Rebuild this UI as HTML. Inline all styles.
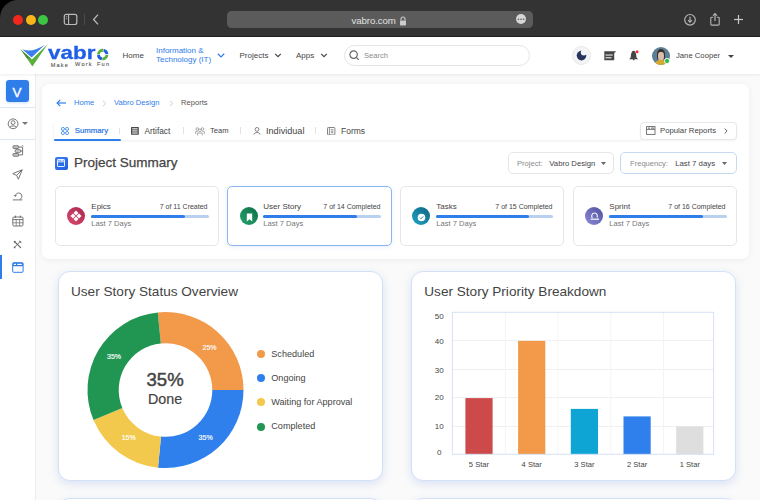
<!DOCTYPE html>
<html><head><meta charset="utf-8">
<style>
*{box-sizing:border-box;margin:0;padding:0}
html,body{width:760px;height:500px;overflow:hidden;background:#000}
body{font-family:"Liberation Sans",sans-serif;position:relative;color:#444}
.a{position:absolute}
.t{position:absolute;white-space:nowrap;line-height:1}
#win{position:absolute;left:0;top:0;width:760px;height:500px;overflow:hidden}
#bg{position:absolute;left:0;top:36px;width:760px;height:464px;background:#fafafa}
#chrome{position:absolute;left:0;top:0;width:760px;height:37px;background:#333333;border-top-left-radius:18px;border-bottom:1px solid #202020}
#hdr{position:absolute;left:0;top:37px;width:760px;height:37px;background:#fff;box-shadow:0 1px 3px rgba(0,0,0,.07);z-index:5}
#side{position:absolute;left:0;top:74px;width:36px;height:426px;background:#fff;border-right:1px solid #ececee}
#panel{position:absolute;left:42px;top:84px;width:707px;height:175px;background:#fff;border-radius:7px;box-shadow:0 1px 6px rgba(0,0,0,.06)}
.card{position:absolute;top:186px;width:164px;height:59.5px;border:1px solid #e6e6e8;border-radius:5px;background:#fff}
.ic{position:absolute;left:11px;top:19.9px;width:18.2px;height:18.2px;border-radius:50%}
.ct{position:absolute;left:35.3px;top:15.8px;font-size:8px;color:#444;line-height:1}
.cr{position:absolute;right:10.5px;top:16.3px;font-size:7px;color:#444;line-height:1}
.bar{position:absolute;left:34.7px;top:28.1px;width:118px;height:3px;border-radius:2px;background:#b9d0f1}
.bar i{position:absolute;left:0;top:0;height:3px;border-radius:2px;background:#2f7de9}
.cl{position:absolute;left:35.3px;top:32.5px;font-size:7.6px;color:#777;line-height:1}
.chart{position:absolute;top:271px;width:324.5px;height:209.5px;background:#fff;border:1px solid #d3e1f7;border-radius:12px;box-shadow:0 3px 10px rgba(80,120,225,.19)}
</style></head><body>
<div id="win">
 <div id="bg"></div>
 <div id="chrome">
  <div class="a" style="left:12.8px;top:14.8px;width:10px;height:10px;border-radius:50%;background:#f0291f"></div>
  <div class="a" style="left:25.6px;top:14.8px;width:10px;height:10px;border-radius:50%;background:#f8b718"></div>
  <div class="a" style="left:38.4px;top:14.8px;width:10px;height:10px;border-radius:50%;background:#3cc644"></div>
  <svg class="a" style="left:63px;top:13px" width="16" height="13" viewBox="0 0 16 13"><rect x="1.3" y="1.3" width="12.5" height="10.2" rx="2" fill="none" stroke="#bbb" stroke-width="1.2"/><line x1="5.6" y1="1.3" x2="5.6" y2="11.5" stroke="#bbb" stroke-width="1.1"/><rect x="2.8" y="3.2" width="1.4" height="1" fill="#999"/><rect x="2.8" y="5.2" width="1.4" height="1" fill="#999"/></svg>
  <div class="a" style="left:83.5px;top:14px;width:1px;height:11px;background:#4a4a4a"></div>
  <svg class="a" style="left:91px;top:13px" width="9" height="13" viewBox="0 0 9 13"><polyline points="7,1.6 2.6,6.5 7,11.4" fill="none" stroke="#bbb" stroke-width="1.3"/></svg>
  <div class="a" style="left:227px;top:10.5px;width:306px;height:17.5px;background:#5b5b5b;border-radius:4.5px"></div>
  <div class="t" style="left:351.5px;top:15.8px;font-size:9.7px;color:#e0e0e0;letter-spacing:-0.1px">vabro.com</div>
  <svg class="a" style="left:399px;top:16px" width="8" height="10" viewBox="0 0 8 10"><path d="M2,4.5 V3 a2,2 0 0 1 4,0 V4.5" fill="none" stroke="#ccc" stroke-width="1.1"/><rect x="1" y="4.5" width="6" height="5" rx="0.8" fill="#ccc"/></svg>
  <svg class="a" style="left:516px;top:14px" width="10" height="10" viewBox="0 0 10 10"><circle cx="5" cy="5" r="5" fill="#d6d6d6"/><circle cx="2.4" cy="5.2" r="0.8" fill="#555"/><circle cx="5" cy="5.2" r="0.8" fill="#555"/><circle cx="7.6" cy="5.2" r="0.8" fill="#555"/></svg>
  <svg class="a" style="left:683px;top:13px" width="15" height="14" viewBox="0 0 15 14"><circle cx="7" cy="6.8" r="5.3" fill="none" stroke="#b5b5b5" stroke-width="1.2"/><line x1="7" y1="3.8" x2="7" y2="9.2" stroke="#b5b5b5" stroke-width="1.2"/><polyline points="5,7.2 7,9.2 9,7.2" fill="none" stroke="#b5b5b5" stroke-width="1.2"/></svg>
  <svg class="a" style="left:709px;top:12px" width="13" height="15" viewBox="0 0 13 15"><path d="M4.2,5.2 H2.7 a0.9,0.9 0 0 0 -0.9,0.9 V12.2 a0.9,0.9 0 0 0 0.9,0.9 H9.3 a0.9,0.9 0 0 0 0.9,-0.9 V6.1 a0.9,0.9 0 0 0 -0.9,-0.9 H7.8" fill="none" stroke="#b5b5b5" stroke-width="1.1"/><line x1="6" y1="1.8" x2="6" y2="9" stroke="#b5b5b5" stroke-width="1.2"/><polyline points="4,3.6 6,1.6 8,3.6" fill="none" stroke="#b5b5b5" stroke-width="1.2"/></svg>
  <svg class="a" style="left:733px;top:14px" width="11" height="11" viewBox="0 0 11 11"><line x1="5.5" y1="1" x2="5.5" y2="10" stroke="#c8c8c8" stroke-width="1.2"/><line x1="1" y1="5.5" x2="10" y2="5.5" stroke="#c8c8c8" stroke-width="1.2"/></svg>
 </div>

 <div id="hdr">
  <!-- logo -->
  <svg class="a" style="left:18px;top:3px" width="32" height="30" viewBox="18 40 32 30">
   <path d="M20.8,49.4 L32.4,66.6 L47.8,43.9 L31.8,59.6 Z" fill="#5cb040"/>
   <path d="M20.8,49.4 L26.5,57.8 L31.8,59.6 Z" fill="#3f8a2e"/>
   <path d="M22.3,49.2 Q32,53.5 44.8,44.8 L31.6,57.6 Z" fill="#3a7ff0"/>
  </svg>
  <div class="t" style="left:47.7px;top:6.2px;font-size:19px;font-weight:bold;color:#1f5ee6;transform:scaleX(1.18);transform-origin:0 0;-webkit-text-stroke:0.3px #1f5ee6">vabr</div>
  <svg class="a" style="left:96px;top:11px" width="14" height="13" viewBox="96 48 14 13">
   <path d="M98.4,54.5 A4.3,4.3 0 0 1 103.4,50.3" fill="none" stroke="#5cb040" stroke-width="2.8"/>
   <path d="M103.8,50.3 A4.3,4.3 0 0 1 107,54.1" fill="none" stroke="#1f5ee6" stroke-width="2.8"/>
   <path d="M107,54.9 A4.3,4.3 0 0 1 102.3,58.8" fill="none" stroke="#5cb040" stroke-width="2.8"/>
   <path d="M101.9,58.8 A4.3,4.3 0 0 1 98.4,55" fill="none" stroke="#1f5ee6" stroke-width="2.8"/>
  </svg>
  <div class="t" style="left:50.8px;top:25.8px;font-size:5.6px;color:#555;letter-spacing:1.15px;-webkit-text-stroke:0.1px #555">Make</div>
  <div class="t" style="left:75.1px;top:24.9px;font-size:5.6px;color:#555;letter-spacing:1.15px;-webkit-text-stroke:0.1px #555">Work</div>
  <div class="t" style="left:96.9px;top:24.9px;font-size:5.6px;color:#555;letter-spacing:1.3px;-webkit-text-stroke:0.1px #555">Fun</div>

  <div class="t" style="left:122.5px;top:15px;font-size:8px;color:#444">Home</div>
  <div class="t" style="left:156px;top:10.3px;font-size:8px;color:#2f7de9;line-height:8.3px">Information &amp;<br>Technology (IT)</div>
  <svg class="a" style="left:217px;top:53px;top:16px" width="8" height="5" viewBox="0 0 8 5"><polyline points="0.8,0.8 4,3.9 7.2,0.8" fill="none" stroke="#2f7de9" stroke-width="1.2"/></svg>
  <div class="t" style="left:239.5px;top:15px;font-size:8px;color:#444">Projects</div>
  <svg class="a" style="left:273.5px;top:16px" width="8" height="5" viewBox="0 0 8 5"><polyline points="1.2,0.9 4,3.7 6.8,0.9" fill="none" stroke="#444" stroke-width="1.2"/></svg>
  <div class="t" style="left:296px;top:15px;font-size:8px;color:#444">Apps</div>
  <svg class="a" style="left:319.5px;top:16px" width="8" height="5" viewBox="0 0 8 5"><polyline points="1.2,0.9 4,3.7 6.8,0.9" fill="none" stroke="#444" stroke-width="1.2"/></svg>

  <div class="a" style="left:344px;top:8px;width:186px;height:20.5px;border:1px solid #e4e4e6;border-radius:11px"></div>
  <svg class="a" style="left:349px;top:13px" width="11" height="11" viewBox="0 0 11 11"><circle cx="4.6" cy="4.6" r="3.7" fill="none" stroke="#666" stroke-width="1.2"/><line x1="7.3" y1="7.3" x2="9.8" y2="9.8" stroke="#666" stroke-width="1.2"/></svg>
  <div class="t" style="left:364px;top:15px;font-size:7.6px;color:#8a8a8a">Search</div>

  <div class="a" style="left:572px;top:9.2px;width:19px;height:19px;border-radius:50%;background:#f4f4f6;border:1px solid #e8e8ea"></div>
  <svg class="a" style="left:576px;top:13px" width="11" height="11" viewBox="0 0 11 11"><defs><mask id="mm"><rect width="11" height="11" fill="#fff"/><circle cx="7.8" cy="2.6" r="3" fill="#000"/></mask></defs><circle cx="5.5" cy="5.6" r="4.8" fill="#26345e" mask="url(#mm)"/></svg>

  <svg class="a" style="left:603.8px;top:13.7px" width="13" height="10" viewBox="0 0 13 10"><path d="M0.3,0.3 H12.2 L10.2,2.3 V9.3 H0.3 Z" fill="#454545"/><rect x="1.5" y="3.3" width="7.2" height="1.5" fill="#bdbdbd"/><rect x="1.5" y="6.3" width="6" height="1" fill="#fff"/></svg>
  <svg class="a" style="left:629.2px;top:13.3px" width="11" height="11" viewBox="0 0 11 11"><path d="M4.6,0.7 C6.1,0.7 6.9,2.6 7.2,4.8 L7.6,7.7 L9.2,9.2 H0 L1.6,7.7 L2,4.8 C2.3,2.6 3.1,0.7 4.6,0.7Z" fill="#454545"/><rect x="3.9" y="9" width="1.4" height="1.3" fill="#454545"/><circle cx="8.1" cy="1.7" r="1.5" fill="#f0303a"/></svg>

  <div class="a" style="left:652px;top:9.5px;width:18px;height:18px;border-radius:50%;background:#5a7f97;overflow:hidden">
   <div class="a" style="left:4.6px;top:2.6px;width:8.6px;height:11px;border-radius:45% 45% 30% 30%;background:#3d3029"></div>
   <div class="a" style="left:6.2px;top:5px;width:5.6px;height:9px;border-radius:40% 40% 50% 50%;background:#d9bcab"></div>
   <div class="a" style="left:2px;top:13.8px;width:14px;height:8px;border-radius:6px 6px 0 0;background:#d6aa2e"></div>
  </div>
  <div class="a" style="left:664px;top:21px;width:5.5px;height:5.5px;border-radius:50%;background:#2dbb47;border:0.8px solid #fff"></div>

  <div class="t" style="left:676px;top:15px;font-size:7.7px;color:#444">Jane Cooper</div>
  <svg class="a" style="left:728px;top:17.5px" width="6" height="3" viewBox="0 0 6 3"><polygon points="0,0 6,0 3,3" fill="#444"/></svg>
 </div>

 <div id="side">
  <div class="a" style="left:6px;top:6px;width:23px;height:22px;border-radius:3px;background:#2f7de9;box-shadow:0 1px 3px rgba(47,125,233,.25)"></div>
  <div class="t" style="left:12.6px;top:11.5px;font-size:13.5px;color:#fff;-webkit-text-stroke:0.35px #fff">V</div>
  <div class="a" style="left:0;top:33px;width:35px;height:1px;background:#dbe6f6"></div>
  <svg class="a" style="left:6.5px;top:43.5px" width="13" height="13" viewBox="0 0 13 13"><circle cx="6.1" cy="5.8" r="4.9" fill="none" stroke="#666" stroke-width="0.9"/><circle cx="6.1" cy="4.6" r="1.9" fill="none" stroke="#666" stroke-width="0.9"/><path d="M2.8,9.4 C3.6,7.4 8.6,7.4 9.4,9.4" fill="none" stroke="#666" stroke-width="0.9"/></svg>
  <svg class="a" style="left:21.5px;top:47.5px" width="6" height="3.5" viewBox="0 0 6 3.5"><polygon points="0,0 6,0 3,3" fill="#777"/></svg>
  <div class="a" style="left:0;top:65px;width:35px;height:1px;background:#dbe6f6"></div>
  <svg class="a" style="left:11.5px;top:70.5px" width="12" height="12" viewBox="0 0 12 12"><rect x="1" y="0.8" width="5.6" height="2.6" rx="0.6" fill="#ccc" stroke="#666" stroke-width="0.9"/><rect x="3.2" y="4.7" width="5.4" height="2.6" rx="0.6" fill="#ddd" stroke="#666" stroke-width="0.9"/><rect x="1" y="8.6" width="5.6" height="2.6" rx="0.6" fill="#ccc" stroke="#666" stroke-width="0.9"/><path d="M6.6,2.1 H10.6 V9.9 H6.6 M8.6,6 H10.6" fill="none" stroke="#666" stroke-width="0.9"/><polyline points="9.6,1.2 10.6,0.3 11.5,1.2" fill="none" stroke="#666" stroke-width="0.7"/></svg>
  <svg class="a" style="left:12px;top:94.5px" width="11" height="11" viewBox="0 0 11 11"><path d="M10.2,0.8 L0.8,4.6 L4.6,6.4 L6.4,10.2 Z M4.6,6.4 L10.2,0.8" fill="none" stroke="#666" stroke-width="0.9" stroke-linejoin="round"/></svg>
  <svg class="a" style="left:12px;top:118px" width="11" height="9" viewBox="0 0 11 9"><path d="M3.2,4.2 C3.4,2.2 4.9,1 6.6,1 C8.6,1 9.9,2.5 9.9,4.2 C9.9,5.8 9,6.9 7.8,7.3" fill="none" stroke="#666" stroke-width="0.9"/><line x1="0.8" y1="7.9" x2="10.4" y2="7.9" stroke="#666" stroke-width="0.9"/><polyline points="1.9,3 3.2,4.4 4.6,3.4" fill="none" stroke="#666" stroke-width="0.8"/></svg>
  <svg class="a" style="left:12px;top:140.5px" width="12" height="12" viewBox="0 0 12 12"><rect x="0.8" y="2" width="10.2" height="9" rx="1.2" fill="none" stroke="#666" stroke-width="0.9"/><line x1="0.8" y1="4.6" x2="11" y2="4.6" stroke="#666" stroke-width="0.9"/><line x1="3.4" y1="0.6" x2="3.4" y2="3" stroke="#666" stroke-width="0.9"/><line x1="8.4" y1="0.6" x2="8.4" y2="3" stroke="#666" stroke-width="0.9"/><line x1="4.2" y1="4.6" x2="4.2" y2="11" stroke="#666" stroke-width="0.7"/><line x1="7.6" y1="4.6" x2="7.6" y2="11" stroke="#666" stroke-width="0.7"/><line x1="0.8" y1="7.8" x2="11" y2="7.8" stroke="#666" stroke-width="0.7"/></svg>
  <svg class="a" style="left:12.5px;top:165.5px" width="9" height="9" viewBox="0 0 9 9"><line x1="1.8" y1="1.8" x2="7.6" y2="7.6" stroke="#666" stroke-width="1.2" stroke-linecap="round"/><line x1="7.2" y1="1.6" x2="1.6" y2="7.2" stroke="#666" stroke-width="0.9"/><circle cx="1.7" cy="1.7" r="1" fill="#666"/><path d="M6.4,0.8 L8.2,2.6" stroke="#666" stroke-width="1.2"/><circle cx="1.6" cy="7.4" r="0.9" fill="#666"/></svg>
  <div class="a" style="left:0;top:181px;width:2px;height:24px;background:#2f7de9"></div>
  <svg class="a" style="left:12px;top:187.5px" width="12" height="11" viewBox="0 0 12 11"><rect x="0.7" y="0.7" width="10.4" height="9.6" rx="1" fill="#fff" stroke="#2f7de9" stroke-width="1"/><rect x="0.7" y="0.7" width="10.4" height="3.6" rx="0.8" fill="#2f7de9"/><rect x="1.8" y="1.8" width="2.2" height="1.2" fill="#fff"/><rect x="5.2" y="1.8" width="4.6" height="1.2" fill="#fff"/></svg>
 </div>

 <div id="panel"></div>
 <!-- breadcrumb -->
 <svg class="a" style="left:56px;top:99px" width="11" height="8" viewBox="0 0 11 8"><line x1="1.2" y1="4" x2="10" y2="4" stroke="#2f7de9" stroke-width="1.2"/><polyline points="4.2,0.9 1.1,4 4.2,7.1" fill="none" stroke="#2f7de9" stroke-width="1.2"/></svg>
 <div class="t" style="left:74px;top:99px;font-size:7.6px;color:#2f7de9">Home</div>
 <svg class="a" style="left:101.5px;top:100px" width="5" height="7" viewBox="0 0 5 7"><polyline points="1,0.8 3.8,3.5 1,6.2" fill="none" stroke="#c8c8c8" stroke-width="0.9"/></svg>
 <div class="t" style="left:114px;top:99px;font-size:7.6px;color:#2f7de9">Vabro Design</div>
 <svg class="a" style="left:169px;top:100px" width="5" height="7" viewBox="0 0 5 7"><polyline points="1,0.8 3.8,3.5 1,6.2" fill="none" stroke="#c8c8c8" stroke-width="0.9"/></svg>
 <div class="t" style="left:181px;top:99px;font-size:7.6px;color:#555">Reports</div>

 <!-- tabs -->
 <div class="a" style="left:54px;top:122px;width:587px;height:18px;border-radius:3px 3px 0 0;box-shadow:0 1px 3px rgba(0,0,0,.08)"></div>
 <div class="a" style="left:54px;top:139px;width:66.5px;height:2px;background:#2f7de9;border-radius:1px"></div>
 <svg class="a" style="left:60.8px;top:127px" width="8" height="8" viewBox="0 0 8 8"><rect x="0.5" y="0.5" width="2.9" height="2.9" rx="1.2" fill="none" stroke="#2f7de9" stroke-width="0.9"/><rect x="4.6" y="0.5" width="2.9" height="2.9" rx="1.2" fill="none" stroke="#2f7de9" stroke-width="0.9"/><rect x="0.5" y="4.6" width="2.9" height="2.9" rx="1.2" fill="none" stroke="#2f7de9" stroke-width="0.9"/><rect x="4.6" y="4.6" width="2.9" height="2.9" rx="1.2" fill="none" stroke="#2f7de9" stroke-width="0.9"/></svg>
 <div class="t" style="left:74.7px;top:127px;font-size:7.8px;color:#2b74e4;-webkit-text-stroke:0.2px #2b74e4">Summary</div>
 <div class="a" style="left:119px;top:127.5px;width:1px;height:6.5px;background:#e2e2e2"></div>
 <svg class="a" style="left:131.3px;top:127px" width="8" height="8" viewBox="0 0 8 8"><rect x="0" y="0" width="7.8" height="7.8" rx="0.5" fill="#4a4a4a"/><rect x="1.2" y="1.2" width="5.4" height="1.2" fill="#e0e0e0"/><rect x="1.2" y="3.3" width="5.4" height="1.2" fill="#e0e0e0"/><rect x="1.2" y="5.4" width="5.4" height="1.2" fill="#e0e0e0"/></svg>
 <div class="t" style="left:144.5px;top:127px;font-size:8.3px;color:#444">Artifact</div>
 <div class="a" style="left:183px;top:127px;width:1px;height:7px;background:#e2e2e2"></div>
 <svg class="a" style="left:194.5px;top:126.5px" width="10" height="9" viewBox="0 0 10 9"><circle cx="2.3" cy="2" r="1.3" fill="none" stroke="#888" stroke-width="0.7"/><circle cx="7.5" cy="2" r="1.3" fill="none" stroke="#888" stroke-width="0.7"/><circle cx="4.9" cy="3.4" r="1.4" fill="none" stroke="#888" stroke-width="0.7"/><path d="M0.7,7 V4.6 H2.6 M9.3,7 V4.6 H7.4 M2.6,8.4 V6 H7.2 V8.4" fill="none" stroke="#888" stroke-width="0.7"/></svg>
 <div class="t" style="left:210px;top:127.2px;font-size:7.6px;color:#444">Team</div>
 <div class="a" style="left:240px;top:127px;width:1px;height:7px;background:#e2e2e2"></div>
 <svg class="a" style="left:252.5px;top:127px" width="8" height="8" viewBox="0 0 8 8"><circle cx="4" cy="2.4" r="1.9" fill="none" stroke="#666" stroke-width="0.8"/><path d="M0.9,7.6 C1.5,4.8 6.5,4.8 7.1,7.6" fill="none" stroke="#666" stroke-width="0.8"/></svg>
 <div class="t" style="left:266px;top:126.5px;font-size:9.1px;color:#444">Individual</div>
 <div class="a" style="left:314.5px;top:127px;width:1px;height:7px;background:#e2e2e2"></div>
 <svg class="a" style="left:327px;top:126.8px" width="8.5" height="8.5" viewBox="0 0 8.5 8.5"><rect x="0.5" y="0.5" width="7.4" height="7.4" rx="0.8" fill="none" stroke="#777" stroke-width="0.9"/><line x1="2.4" y1="0.5" x2="2.4" y2="7.9" stroke="#777" stroke-width="0.8"/><line x1="3.8" y1="2.7" x2="6.4" y2="2.7" stroke="#777" stroke-width="0.8"/><line x1="3.8" y1="4.2" x2="6.4" y2="4.2" stroke="#777" stroke-width="0.8"/><line x1="3.8" y1="5.7" x2="6.4" y2="5.7" stroke="#777" stroke-width="0.8"/></svg>
 <div class="t" style="left:341px;top:126.5px;font-size:8.5px;color:#444">Forms</div>

 <div class="a" style="left:640px;top:122px;width:96.5px;height:17.5px;border:1px solid #e8e8ea;border-radius:4px;box-shadow:0 1px 2px rgba(0,0,0,.05);background:#fff"></div>
 <svg class="a" style="left:645.5px;top:126px" width="10" height="9" viewBox="0 0 10 9"><rect x="0.6" y="0.6" width="8.4" height="7.8" fill="none" stroke="#666" stroke-width="0.9"/><line x1="0.6" y1="3.4" x2="9" y2="3.4" stroke="#666" stroke-width="0.9"/><rect x="2" y="1.6" width="2" height="1" fill="#666"/><rect x="5" y="1.6" width="3" height="1" fill="#666"/></svg>
 <div class="t" style="left:660px;top:127px;font-size:7.75px;color:#444">Popular Reports</div>
 <svg class="a" style="left:724px;top:128px" width="4" height="6" viewBox="0 0 4 6"><polyline points="0.7,0.6 3.1,3 0.7,5.4" fill="none" stroke="#555" stroke-width="0.9"/></svg>

 <!-- title -->
 <div class="a" style="left:54.5px;top:156.6px;width:13px;height:13px;border-radius:2px;background:linear-gradient(135deg,#3b7ef5,#1d5ee0)"></div>
 <svg class="a" style="left:57px;top:159.3px" width="8" height="8" viewBox="0 0 8 8"><rect x="0.5" y="0.5" width="7" height="7" rx="0.6" fill="none" stroke="#fff" stroke-width="0.9"/><line x1="0.5" y1="2.8" x2="7.5" y2="2.8" stroke="#fff" stroke-width="0.8"/><rect x="1.5" y="1.2" width="1.2" height="0.9" fill="#fff"/><rect x="3.5" y="1.2" width="3" height="0.9" fill="#fff"/></svg>
 <div class="t" style="left:74px;top:155.5px;font-size:13.5px;color:#444;-webkit-text-stroke:0.25px #444">Project Summary</div>

 <div class="a" style="left:508px;top:152px;width:105.5px;height:22px;border:1px solid #e6e6e8;border-radius:5px;background:#fff"></div>
 <div class="t" style="left:517px;top:159.5px;font-size:7.6px;color:#8a8a8a">Project:</div>
 <div class="t" style="left:549.3px;top:159.5px;font-size:7.7px;color:#444">Vabro Design</div>
 <svg class="a" style="left:600.5px;top:161.5px" width="5" height="3" viewBox="0 0 5 3"><polygon points="0,0 5,0 2.5,3" fill="#666"/></svg>
 <div class="a" style="left:620px;top:152px;width:117px;height:22px;border:1px solid #c7d8f4;border-radius:5px;background:#fff"></div>
 <div class="t" style="left:630px;top:159.5px;font-size:7.6px;color:#8a8a8a">Frequency:</div>
 <div class="t" style="left:675.2px;top:159.5px;font-size:7.8px;color:#444">Last 7 days</div>
 <svg class="a" style="left:721.8px;top:161.5px" width="5" height="3" viewBox="0 0 5 3"><polygon points="0,0 5,0 2.5,3" fill="#666"/></svg>

 <!-- cards -->
 <div class="card" style="left:55px">
  <div class="ic" style="background:linear-gradient(45deg,#dc4770,#a8284c)"></div>
  <svg class="a" style="left:14.1px;top:23px" width="12" height="12" viewBox="0 0 12 12"><g fill="#fff" transform="rotate(45 6 6)"><rect x="2.1" y="2.1" width="3.5" height="3.5"/><rect x="6.4" y="2.1" width="3.5" height="3.5"/><rect x="2.1" y="6.4" width="3.5" height="3.5"/><rect x="6.4" y="6.4" width="3.5" height="3.5"/></g></svg>
  <div class="ct">Epics</div><div class="cr">7 of 11 Created</div>
  <div class="bar"><i style="width:94px"></i></div>
  <div class="cl">Last 7 Days</div>
 </div>
 <div class="card" style="left:227px;width:165px;border-color:#8db4ee;box-shadow:0 1px 4px rgba(47,125,233,.12)">
  <div class="ic" style="left:12px;background:linear-gradient(45deg,#25a56e,#0b6e45)"></div>
  <svg class="a" style="left:17.8px;top:25.6px" width="7" height="9" viewBox="0 0 7 9"><path d="M0.8,0.6 H6.2 V8.4 L3.5,6.2 L0.8,8.4Z" fill="#fff"/></svg>
  <div class="ct">User Story</div><div class="cr">7 of 14 Completed</div>
  <div class="bar" style="width:118px"><i style="width:94px"></i></div>
  <div class="cl">Last 7 Days</div>
 </div>
 <div class="card" style="left:400px">
  <div class="ic" style="background:linear-gradient(45deg,#22a3c4,#0b6585)"></div>
  <svg class="a" style="left:16.3px;top:25.6px" width="9" height="9" viewBox="0 0 9 9"><circle cx="4.5" cy="4.5" r="3.8" fill="#fff"/><polyline points="2.8,4.6 4,5.8 6.3,3.4" fill="none" stroke="#137fa3" stroke-width="0.9"/></svg>
  <div class="ct">Tasks</div><div class="cr">7 of 15 Completed</div>
  <div class="bar" style="width:117.5px"><i style="width:93.5px"></i></div>
  <div class="cl">Last 7 Days</div>
 </div>
 <div class="card" style="left:573px">
  <div class="ic" style="background:linear-gradient(45deg,#8b8bd8,#50509f)"></div>
  <svg class="a" style="left:14.8px;top:23.8px" width="11" height="10" viewBox="0 0 11 10"><path d="M3.4,7.2 C2.2,5.8 2.4,2.2 5.4,2 C8.2,1.9 8.8,5 8,6.6" fill="none" stroke="#fff" stroke-width="1.1"/><line x1="1.6" y1="8.2" x2="9.6" y2="8.2" stroke="#fff" stroke-width="1.1"/><polyline points="8.6,7.2 9.6,8.2 8.6,9.2" fill="none" stroke="#fff" stroke-width="0.8"/></svg>
  <div class="ct">Sprint</div><div class="cr">7 of 16 Completed</div>
  <div class="bar" style="width:118px"><i style="width:94px"></i></div>
  <div class="cl">Last 7 Days</div>
 </div>

 <!-- charts -->
 <div class="chart" style="left:58px"></div>
 <div class="chart" style="left:411px;width:325px"></div>
 <div class="chart" style="left:58px;top:498.3px"></div>
 <div class="chart" style="left:411px;width:325px;top:498.3px"></div>
 <div class="t" style="left:71px;top:284.7px;font-size:13.6px;color:#444">User Story Status Overview</div>
 <svg class="a" style="left:0;top:0" width="760" height="500" viewBox="0 0 760 500"><path d="M157.75,312.39 A78,78 0 0 1 243.50,390.00 L212.30,390.00 A46.8,46.8 0 0 0 160.85,343.43 Z" fill="#f2994a"/><path d="M243.50,390.00 A78,78 0 0 1 158.02,467.64 L161.01,436.58 A46.8,46.8 0 0 0 212.30,390.00 Z" fill="#2f80ed"/><path d="M158.02,467.64 A78,78 0 0 1 93.54,420.10 L122.33,408.06 A46.8,46.8 0 0 0 161.01,436.58 Z" fill="#f2c94c"/><path d="M93.54,420.10 A78,78 0 0 1 157.75,312.39 L160.85,343.43 A46.8,46.8 0 0 0 122.33,408.06 Z" fill="#219653"/></svg>
 <div class="t" style="left:202.5px;top:344px;font-size:7px;color:#fff;-webkit-text-stroke:0.15px #fff">25%</div>
 <div class="t" style="left:107px;top:352.5px;font-size:7px;color:#fff;-webkit-text-stroke:0.15px #fff">35%</div>
 <div class="t" style="left:121.7px;top:433.8px;font-size:7px;color:#fff;-webkit-text-stroke:0.15px #fff">15%</div>
 <div class="t" style="left:198.6px;top:433.8px;font-size:7px;color:#fff;-webkit-text-stroke:0.15px #fff">35%</div>
 <div class="t" style="left:146.5px;top:370.5px;font-size:18.6px;color:#444;-webkit-text-stroke:0.45px #444">35%</div>
 <div class="t" style="left:148px;top:392.4px;font-size:14.3px;color:#444;-webkit-text-stroke:0.2px #444">Done</div>
 <div class="a" style="left:257.2px;top:350.2px;width:8px;height:8px;border-radius:50%;background:#f2994a"></div>
 <div class="a" style="left:257.2px;top:374.4px;width:8px;height:8px;border-radius:50%;background:#2f80ed"></div>
 <div class="a" style="left:257.2px;top:398.4px;width:8px;height:8px;border-radius:50%;background:#f2c94c"></div>
 <div class="a" style="left:257.2px;top:422.5px;width:8px;height:8px;border-radius:50%;background:#219653"></div>
 <div class="t" style="left:271.3px;top:350px;font-size:9.1px;color:#444">Scheduled</div>
 <div class="t" style="left:271.3px;top:374px;font-size:9.1px;color:#444">Ongoing</div>
 <div class="t" style="left:271.3px;top:398px;font-size:9.1px;color:#444">Waiting for Approval</div>
 <div class="t" style="left:271.3px;top:422px;font-size:9.1px;color:#444">Completed</div>

 <div class="t" style="left:424.3px;top:284.7px;font-size:13.6px;color:#444">User Story Priority Breakdown</div>
<svg class="a" style="left:0;top:0" width="760" height="500" viewBox="0 0 760 500">
<line x1="452.4" y1="340.4" x2="713.6" y2="340.4" stroke="#efefef" stroke-width="1"/>
<line x1="452.4" y1="369.4" x2="713.6" y2="369.4" stroke="#efefef" stroke-width="1"/>
<line x1="452.4" y1="397.6" x2="713.6" y2="397.6" stroke="#efefef" stroke-width="1"/>
<line x1="452.4" y1="426.4" x2="713.6" y2="426.4" stroke="#efefef" stroke-width="1"/>
<line x1="505.25" y1="312.3" x2="505.25" y2="454.3" stroke="#f4f4f4" stroke-width="1"/>
<line x1="558.00" y1="312.3" x2="558.00" y2="454.3" stroke="#f4f4f4" stroke-width="1"/>
<line x1="610.75" y1="312.3" x2="610.75" y2="454.3" stroke="#f4f4f4" stroke-width="1"/>
<line x1="663.50" y1="312.3" x2="663.50" y2="454.3" stroke="#f4f4f4" stroke-width="1"/>
<rect x="465.40" y="398.1" width="27.2" height="56.20" fill="#cd4a4a"/>
<rect x="518.10" y="340.9" width="27.2" height="113.40" fill="#f2994a"/>
<rect x="570.80" y="408.9" width="27.2" height="45.40" fill="#0ea5d5"/>
<rect x="623.50" y="416.4" width="27.2" height="37.90" fill="#2f80ed"/>
<rect x="676.20" y="426.4" width="27.2" height="27.90" fill="#dedede"/>
<rect x="452.4" y="312.3" width="261.20" height="142.00" fill="none" stroke="#d6e2f6" stroke-width="1"/>
</svg>
<div class="t" style="left:427.2px;width:24px;text-align:center;top:448.60px;font-size:8px;color:#444">0</div>
<div class="t" style="left:427.2px;width:24px;text-align:center;top:423.30px;font-size:8px;color:#444">10</div>
<div class="t" style="left:427.2px;width:24px;text-align:center;top:394.20px;font-size:8px;color:#444">20</div>
<div class="t" style="left:427.2px;width:24px;text-align:center;top:367.00px;font-size:8px;color:#444">30</div>
<div class="t" style="left:427.2px;width:24px;text-align:center;top:337.70px;font-size:8px;color:#444">40</div>
<div class="t" style="left:427.2px;width:24px;text-align:center;top:312.60px;font-size:8px;color:#444">50</div>
<div class="t" style="left:459.00px;width:40px;text-align:center;top:460.5px;font-size:7.6px;color:#444">5 Star</div>
<div class="t" style="left:511.70px;width:40px;text-align:center;top:460.5px;font-size:7.6px;color:#444">4 Star</div>
<div class="t" style="left:564.40px;width:40px;text-align:center;top:460.5px;font-size:7.6px;color:#444">3 Star</div>
<div class="t" style="left:617.10px;width:40px;text-align:center;top:460.5px;font-size:7.6px;color:#444">2 Star</div>
<div class="t" style="left:669.80px;width:40px;text-align:center;top:460.5px;font-size:7.6px;color:#444">1 Star</div>
</div>
</body></html>
